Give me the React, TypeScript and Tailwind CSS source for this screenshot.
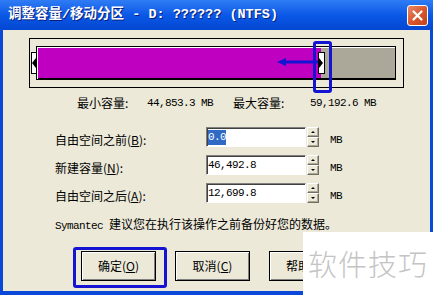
const cjk = "font-['SimSun','Noto_Sans_CJK_SC',sans-serif]"
const mono = "font-['Liberation_Mono','Noto_Sans_CJK_SC',monospace] text-[11px] tracking-[-0.6px]"

// classic raised 3D look for buttons
const raised =
  'bg-[#ece9d8] border border-black shadow-[inset_1px_1px_0_#ffffff,inset_-1px_-1px_0_#808080]'

// lighter raised look for the small spin buttons
const spin =
  'flex h-[10px] items-center justify-center border border-t-white border-l-white border-b-[#716f64] border-r-[#716f64] bg-[#ece9d8] shadow-[inset_-1px_-1px_0_#aca899]'

function Spinner() {
  return (
    <div className="ml-[1px] flex h-[20px] w-[12px] flex-col">
      <div className={spin}>
        <span className="h-0 w-0 border-x-[2px] border-b-[2px] border-x-transparent border-b-black" />
      </div>
      <div className={spin}>
        <span className="h-0 w-0 border-x-[2px] border-t-[2px] border-x-transparent border-t-black" />
      </div>
    </div>
  )
}

function SizeRow({ label, hot, rest, value, selected }: {
  label: string
  hot: string
  rest: string
  value: string
  selected?: boolean
}) {
  return (
    <div className="flex h-[20px] items-start">
      <div className={`${cjk} w-[151px] pt-[3px] text-[12px] leading-[20px] text-black`}>
        {label}(<span className="underline">{hot}</span>){rest}
      </div>
      <div className="flex h-[20px] w-[100px] items-center border border-t-[#808080] border-l-[#808080] border-b-white border-r-white bg-white pl-[1px] shadow-[inset_1px_1px_0_#404040]">
        <span className={`${mono} leading-[15px] text-black ${selected ? 'bg-[#316ac5] text-white' : ''}`}>
          {value}
        </span>
      </div>
      <Spinner />
      <div className={`${mono} ml-[11px] pt-[6px] leading-[14px] text-black`}>MB</div>
    </div>
  )
}

function Button({ children }: { children: React.ReactNode }) {
  return (
    <div className={`${raised} ${cjk} flex h-[30px] w-[75px] items-center justify-center text-[12px] text-black`}>
      {children}
    </div>
  )
}

export default function App() {
  return (
    <div className="relative flex h-[295px] w-[433px] flex-col overflow-hidden bg-[#0a48da]">
      {/* title bar */}
      <div className="flex h-[30px] shrink-0 items-center justify-between bg-gradient-to-b from-[#2f7cf5] via-[#0a58e6] to-[#0447d2] pl-[8px] pr-[5px]">
        <span className="font-['Liberation_Mono','Noto_Sans_CJK_SC',monospace] text-[13.5px] font-bold text-white [text-shadow:1px_1px_0_#0a1e7a]">
          调整容量/移动分区 - D: ?????? (NTFS)
        </span>
        <div className="flex h-[21px] w-[21px] items-center justify-center rounded-[3px] border border-white bg-gradient-to-br from-[#e88a68] via-[#d9582f] to-[#c2401a]">
          <svg width="13" height="13" viewBox="0 0 13 13">
            <path d="M2.5 2.5 L10.5 10.5 M10.5 2.5 L2.5 10.5" stroke="#fff" strokeWidth="2.2" strokeLinecap="round" />
          </svg>
        </div>
      </div>

      {/* body */}
      <div className="relative mx-[3px] mb-[4px] flex flex-1 flex-col bg-[#ece9d8]">
        {/* partition map */}
        <div className="relative ml-[26px] mt-[8px] h-[50px] w-[375px] border border-black pl-[6px] pt-[7px]">
          <div className="flex h-[34px] w-[360px] border border-black">
            <div className="h-full w-[284px] bg-[#c000c0] shadow-[inset_1px_1px_0_#ffffff,inset_0_-1px_0_#000]" />
            <div className="h-full flex-1 bg-[#aca899] shadow-[inset_0_1px_0_#ffffff,inset_0_-1px_0_#000]" />
          </div>
          {/* left handle */}
          <div className="absolute left-[1px] top-[13px] flex h-[22px] w-[6px] items-center justify-start border border-black bg-white">
            <span className="h-0 w-0 border-y-[5px] border-r-[4px] border-y-transparent border-r-black" />
          </div>
          {/* right handle */}
          <div className="absolute left-[288px] top-[13px] flex h-[22px] w-[7px] items-center justify-start border border-black bg-white">
            <span className="h-0 w-0 border-y-[5px] border-l-[4px] border-y-transparent border-l-black" />
          </div>
        </div>

        {/* min / max */}
        <div className="ml-[74px] mt-[8px] flex h-[14px] items-center text-black">
          <span className={`${cjk} w-[70px] text-[12px]`}>最小容量:</span>
          <span className={`${mono} w-[86px]`}>44,853.3 MB</span>
          <span className={`${cjk} w-[77px] text-[12px]`}>最大容量:</span>
          <span className={mono}>59,192.6 MB</span>
        </div>

        {/* sizes */}
        <div className="ml-[52px] mt-[17px] flex flex-col gap-[8px]">
          <SizeRow label="自由空间之前" hot="B" rest=":" value="0.0" selected />
          <SizeRow label="新建容量" hot="N" rest=":" value="46,492.8" />
          <SizeRow label="自由空间之后" hot="A" rest=":" value="12,699.8" />
        </div>

        <div className={`${cjk} ml-[52px] mt-[14px] text-[12px] leading-[14px] text-black`}>
          <span className={mono}>Symantec </span>建议您在执行该操作之前备份好您的数据。
        </div>

        {/* buttons */}
        <div className="ml-[78px] mt-[18px] flex gap-[19px]">
          <Button>确定(<span className="underline">O</span>)</Button>
          <Button>取消(<span className="underline">C</span>)</Button>
          <Button>帮助(<span className="underline">H</span>)</Button>
        </div>

        {/* annotations */}
        <div className="absolute left-[310px] top-[11px] h-[52px] w-[19px] rounded-[3px] border-[3px] border-[#1414d2]" />
        <svg className="absolute left-[273px] top-[27px]" width="42" height="10" viewBox="0 0 42 10">
          <path d="M9 5 H42" stroke="#1414d2" strokeWidth="3" />
          <path d="M1 5 L10 1 L10 9 Z" fill="#1414d2" />
        </svg>
        <div className="absolute left-[70px] top-[217px] h-[41px] w-[94px] rounded-[3px] border-[3px] border-[#1414d2]" />
      </div>

      {/* watermark */}
      <div className="absolute left-[303px] top-[232px] flex h-[63px] w-[130px] items-center justify-center bg-white">
        <span className="font-['Noto_Sans_CJK_SC',sans-serif] text-[29px] font-light tracking-[1px] text-[#c4c4c4]">
          软件技巧
        </span>
      </div>
    </div>
  )
}
